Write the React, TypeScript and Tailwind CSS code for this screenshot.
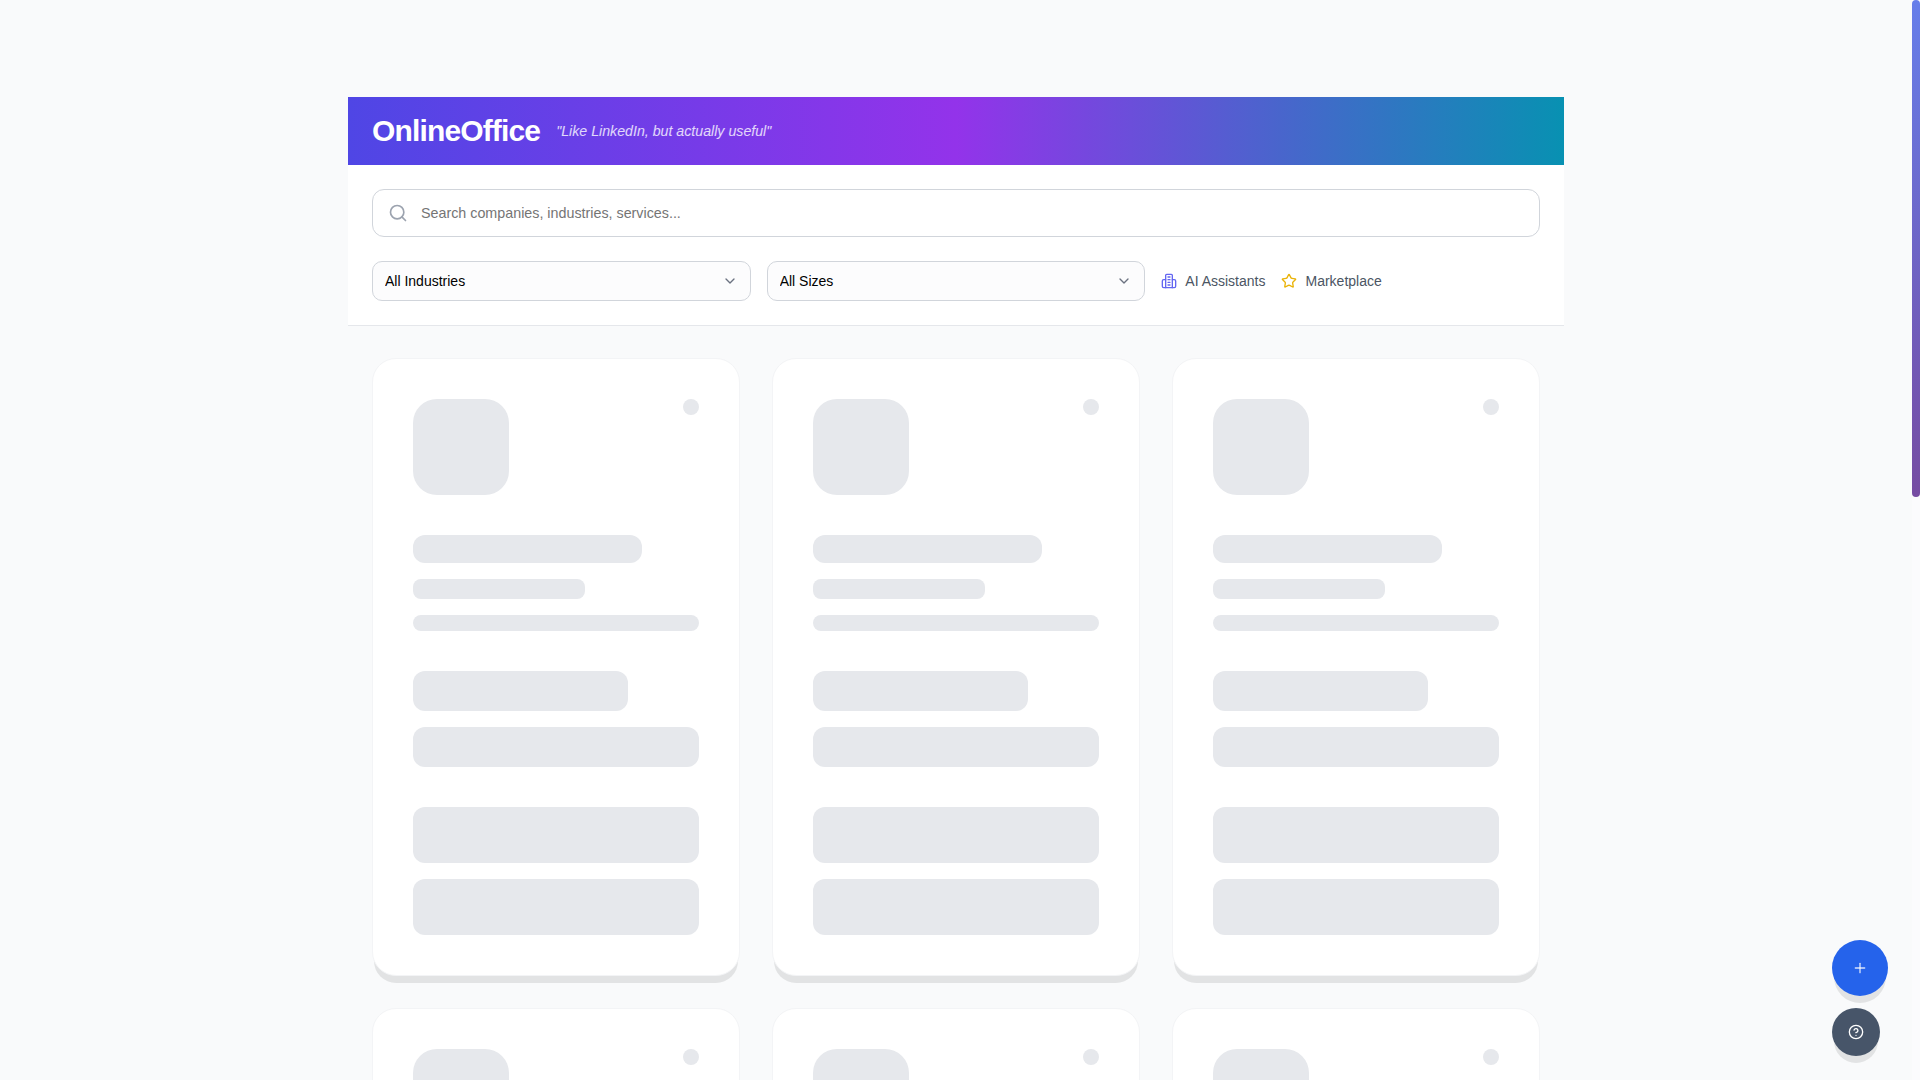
import { ChevronDown, CircleHelp, Plus, Search, Star } from "lucide-react";

const SkeletonCard = () => {
  return (
    <div className="flex flex-col rounded-3xl border border-[#f3f4f6] bg-white p-10 shadow-[0_9px_0_-2px_rgba(0,0,0,0.09)]">
      <div className="mb-10 flex items-start justify-between">
        <div className="h-24 w-24 rounded-3xl bg-[#e6e8ec]" />
        <div className="h-4 w-4 rounded-full bg-[#e6e8ec]" />
      </div>

      <div className="mb-4 h-7 w-4/5 rounded-xl bg-[#e6e8ec]" />
      <div className="mb-4 h-5 w-3/5 rounded-lg bg-[#e6e8ec]" />
      <div className="mb-10 h-4 w-full rounded-lg bg-[#e6e8ec]" />

      <div className="mb-4 h-10 w-3/4 rounded-xl bg-[#e6e8ec]" />
      <div className="mb-10 h-10 w-full rounded-xl bg-[#e6e8ec]" />

      <div className="mb-4 h-14 w-full rounded-xl bg-[#e6e8ec]" />
      <div className="h-14 w-full rounded-xl bg-[#e6e8ec]" />
    </div>
  );
};

const FilterSelect = ({ options }: { options: string[] }) => {
  return (
    <div className="relative">
      <select className="h-10 w-full appearance-none rounded-[10px] border border-[#d1d5db] bg-[#fcfcfd] px-3 font-['Liberation_Sans',sans-serif] text-sm text-black outline-none">
        {options.map((option) => (
          <option key={option}>{option}</option>
        ))}
      </select>
      <ChevronDown className="pointer-events-none absolute right-[13px] top-3 h-4 w-4 text-[#6b7280]" />
    </div>
  );
};

export default function App() {
  return (
    <div className="min-h-screen bg-[#f9fafb] pr-2 font-['Liberation_Sans',sans-serif]">
      <div className="mx-auto w-[1216px] pb-[71px] pt-[97px]">
        {/* Header */}
        <div className="flex h-[68px] items-center gap-4 bg-[linear-gradient(90deg,#4f46e5,#9333ea_50%,#0891b2)] px-6">
          <h1 className="text-[30px] font-bold leading-9 tracking-[-0.85px] text-white">OnlineOffice</h1>
          <span className="text-[14.2px] leading-5 italic text-white/80">"Like LinkedIn, but actually useful"</span>
        </div>

        {/* Search + filters */}
        <div className="border-b border-[#e5e7eb] bg-white p-6">
          <div className="relative mb-6">
            <Search className="absolute left-4 top-[14px] h-5 w-5 text-[#9ca3af]" />
            <input
              placeholder="Search companies, industries, services..."
              className="h-12 w-full rounded-xl border border-[#d1d5db] bg-white pl-12 pr-4 text-[14.3px] outline-none placeholder:text-[#757575]"
            />
          </div>
          <div className="grid grid-cols-3 gap-4">
            <FilterSelect options={["All Industries", "Technology", "Finance"]} />
            <FilterSelect options={["All Sizes", "Small", "Large"]} />
            <div className="flex items-center gap-4 text-sm text-[#4b5563]">
              <a className="flex items-center gap-2">
                <svg viewBox="0 0 24 24" className="h-4 w-4 text-[#6366f1]" fill="none" stroke="currentColor" strokeWidth="2" strokeLinecap="round" strokeLinejoin="round">
                  <path d="M7 22V3.5A1.5 1.5 0 0 1 8.5 2h7A1.5 1.5 0 0 1 17 3.5V22" />
                  <path d="M7 10H4a2 2 0 0 0-2 2v8a2 2 0 0 0 2 2h16a2 2 0 0 0 2-2v-8a2 2 0 0 0-2-2h-3" />
                  <path d="M10.5 6h3M10.5 10h3M10.5 14h3M10.5 18h3" />
                </svg>
                AI Assistants
              </a>
              <a className="flex items-center gap-2">
                <Star className="h-4 w-4 text-[#eab308]" />
                Marketplace
              </a>
            </div>
          </div>
        </div>

        {/* Company grid */}
        <div className="grid grid-cols-3 gap-8 px-6 pt-8">
          {Array(9)
            .fill(0)
            .map((_, i) => (
              <SkeletonCard key={i} />
            ))}
        </div>
      </div>

      {/* Scrollbar thumb */}
      <div className="fixed inset-y-0 right-0 w-2 bg-[#fbfbfd]">
        <div className="h-[497px] rounded-[4px] bg-[linear-gradient(180deg,#667eea,#764ba2)]" />
      </div>

      {/* Floating buttons */}
      <div className="fixed bottom-6 right-8 flex flex-col items-start gap-3">
        <button className="flex h-14 w-14 items-center justify-center rounded-full bg-[#2563eb] text-white/80 shadow-[0_9px_0_-2px_rgba(0,0,0,0.09)]">
          <Plus className="h-4 w-4" />
        </button>
        <button className="flex h-12 w-12 items-center justify-center rounded-full bg-[#475569] text-white shadow-[0_9px_0_-2px_rgba(0,0,0,0.09)]">
          <CircleHelp className="h-4 w-4" />
        </button>
      </div>
    </div>
  );
}
